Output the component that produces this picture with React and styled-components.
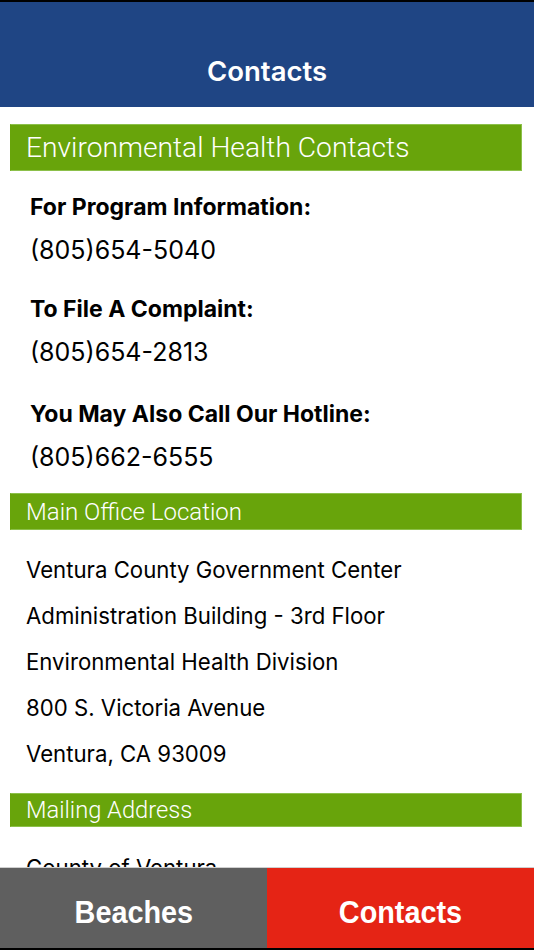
import React from "react";
import styled, { createGlobalStyle } from "styled-components";

const Global = createGlobalStyle`
  html, body { margin: 0; padding: 0; background: #000; }
  body { font-family: Inter, "Noto Sans", sans-serif; }
  * { box-sizing: border-box; }
`;

const Screen = styled.div`
  width: 534px;
  height: 950px;
  display: flex;
  flex-direction: column;
  background: #fff;
  border-top: 2px solid #000;
  border-bottom: 2px solid #000;
  overflow: hidden;
`;

const Header = styled.header`
  height: 105px;
  flex: none;
  background: #1f4584;
  display: flex;
  align-items: flex-end;
  justify-content: center;
  padding-bottom: 20px;
`;

const Title = styled.h1`
  margin: 0;
  color: #fff;
  font-family: Inter, "Noto Sans", sans-serif;
  font-weight: 600;
  font-size: 27.5px;
  line-height: 32px;
`;

const Scroll = styled.main`
  flex: 1;
  overflow: hidden;
  padding: 17px 12px 0 10px;
  display: flex;
  flex-direction: column;
`;

const SectionBar = styled.div`
  height: ${(p) => p.$h}px;
  flex: none;
  background: #68a40b;
  border: 1px solid #8cc04a;
  border-left-color: #68a40b;
  display: flex;
  align-items: center;
  padding-left: 15px;
  color: #fff;
  font-family: Roboto, "Noto Sans", sans-serif;
  font-weight: 300;
  font-size: ${(p) => p.$size}px;
  white-space: nowrap;
  margin-bottom: ${(p) => p.$mb}px;
`;

const Block = styled.div`
  display: flex;
  flex-direction: column;
  padding-left: 20px;
  margin-bottom: ${(p) => p.$mb}px;
`;

const Label = styled.div`
  font-family: Inter, "Noto Sans", sans-serif;
  font-weight: 700;
  font-size: 23px;
  line-height: 30px;
  color: #000;
  white-space: nowrap;
  margin-top: ${(p) => p.$mt || 0}px;
`;

const Phone = styled.div`
  font-family: Inter, "Noto Sans", sans-serif;
  font-weight: 400;
  font-size: 25px;
  line-height: 40px;
  color: #000;
  margin-top: 8px;
`;

const AddressList = styled.div`
  display: flex;
  flex-direction: column;
  padding-left: 16px;
  margin-bottom: ${(p) => p.$mb}px;
`;

const AddressLine = styled.div`
  font-family: Inter, "Noto Sans", sans-serif;
  font-size: 22.2px;
  line-height: 46px;
  color: #000;
  white-space: nowrap;
`;

const TabBar = styled.nav`
  height: 81px;
  flex: none;
  display: grid;
  grid-template-columns: 267px 1fr;
  border-top: 1px solid #cfcfcf;
`;

const Tab = styled.div`
  background: ${(p) => (p.$active ? "#e52415" : "#5f5f5f")};
  color: #fff;
  display: flex;
  align-items: center;
  justify-content: center;
  padding-top: 8px;
`;

const TabLabel = styled.span`
  display: inline-block;
  font-family: "Liberation Sans", Arial, sans-serif;
  font-weight: 700;
  font-size: 32px;
  line-height: 40px;
  transform: scaleX(0.9);
`;

export default function App() {
  return (
    <>
      <Global />
      <Screen>
        <Header>
          <Title>Contacts</Title>
        </Header>
        <Scroll>
          <SectionBar $h={47} $size={28.2} $mb={21}>
            Environmental Health Contacts
          </SectionBar>
          <Block $mb={16}>
            <Label>For Program Information:</Label>
            <Phone>(805)654-5040</Phone>
            <Label $mt={24}>To File A Complaint:</Label>
            <Phone>(805)654-2813</Phone>
            <Label $mt={27}>You May Also Call Our Hotline:</Label>
            <Phone>(805)662-6555</Phone>
          </Block>
          <SectionBar $h={37} $size={24} $mb={17}>
            Main Office Location
          </SectionBar>
          <AddressList $mb={16}>
            <AddressLine>Ventura County Government Center</AddressLine>
            <AddressLine>Administration Building - 3rd Floor</AddressLine>
            <AddressLine>Environmental Health Division</AddressLine>
            <AddressLine>800 S. Victoria Avenue</AddressLine>
            <AddressLine>Ventura, CA 93009</AddressLine>
          </AddressList>
          <SectionBar $h={34} $size={23.7} $mb={18}>
            Mailing Address
          </SectionBar>
          <AddressList $mb={0}>
            <AddressLine>County of Ventura</AddressLine>
          </AddressList>
        </Scroll>
        <TabBar>
          <Tab>
            <TabLabel>Beaches</TabLabel>
          </Tab>
          <Tab $active>
            <TabLabel>Contacts</TabLabel>
          </Tab>
        </TabBar>
      </Screen>
    </>
  );
}
